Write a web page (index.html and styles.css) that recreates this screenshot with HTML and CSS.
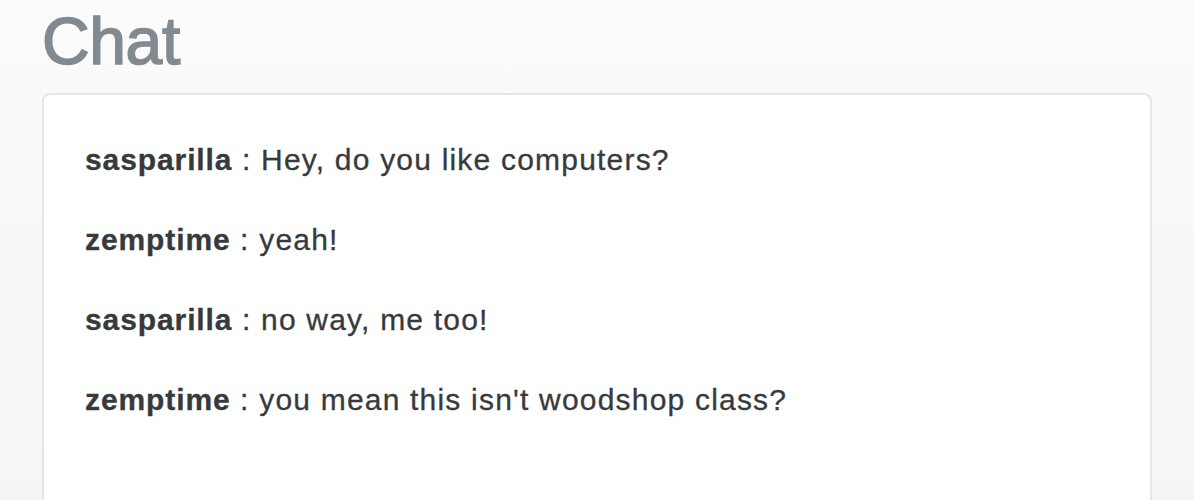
FILE: index.html
```html
<!DOCTYPE html>
<html>
<head>
<meta charset="utf-8">
<link rel="stylesheet" href="styles.css">
</head>
<body>
<div class="page">
  <h1 class="title">Chat</h1>
  <div class="card">
    <p class="msg"><strong>sasparilla</strong> : Hey, do you like computers?</p>
    <p class="msg"><strong>zemptime</strong> : yeah!</p>
    <p class="msg"><strong>sasparilla</strong> : no way, me too!</p>
    <p class="msg"><strong>zemptime</strong> : you mean this isn't woodshop class?</p>
  </div>
</div>
</body>
</html>
```
FILE: styles.css
```css
html, body {
  margin: 0;
  padding: 0;
}
body {
  font-family: "Liberation Sans", Arial, sans-serif;
  color: #373a3c;
  background: linear-gradient(#fbfbfb, #f5f5f5) no-repeat;
  height: 500px;
  overflow: hidden;
}
.page {
  padding: 0 42px;
}
.title {
  margin: 0;
  padding-top: 6px;
  font-size: 66px;
  line-height: 70px;
  font-weight: 500;
  color: #818a91;
  -webkit-text-stroke: 1.6px #818a91;
  letter-spacing: -0.4px;
  height: 87px;
}
.card {
  background: #fff;
  border: 2px solid #e6e6e6;
  border-radius: 8px;
  padding: 44px 41px 60px;
  min-height: 300px;
}
.msg {
  margin: 0 0 38px;
  font-size: 30px;
  line-height: 42px;
  letter-spacing: 1.2px;
  -webkit-text-stroke: 0.3px #373a3c;
}
.msg strong {
  font-weight: bold;
  letter-spacing: 0.9px;
}
```
